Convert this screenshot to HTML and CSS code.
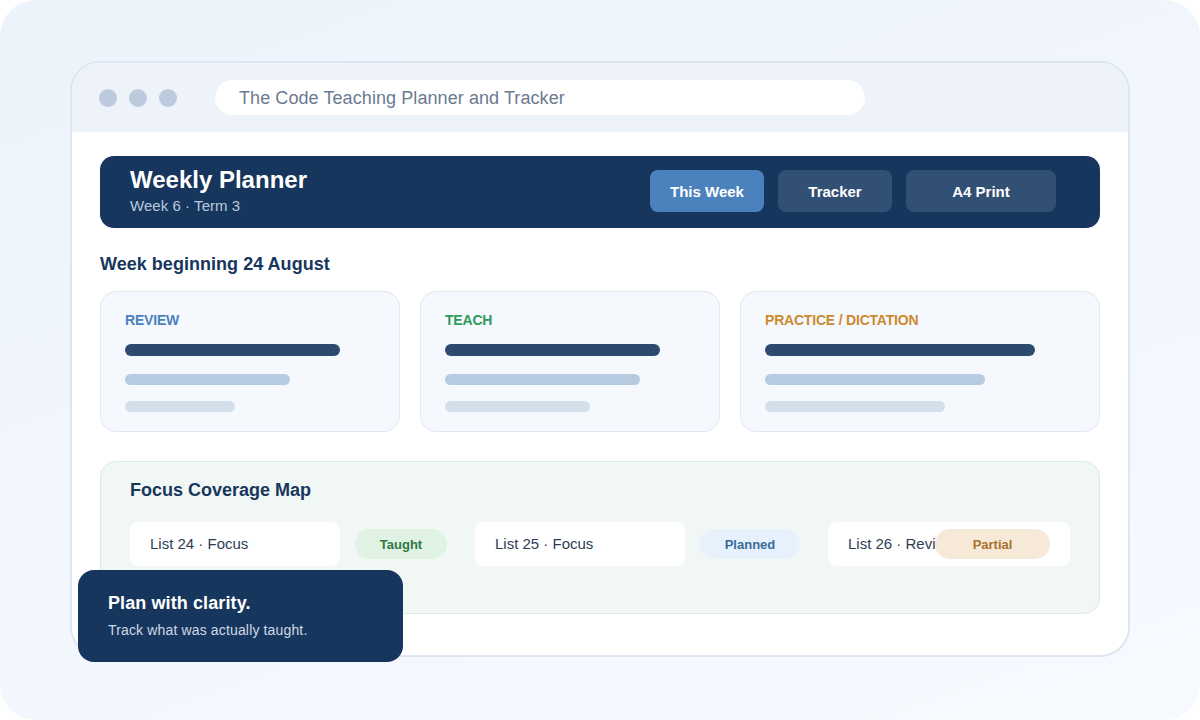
FILE: index.html
```html
<!DOCTYPE html>
<html lang="en">
<head>
<meta charset="utf-8">
<title>The Code Teaching Planner and Tracker</title>
<link rel="stylesheet" href="styles.css">
</head>
<body>
<div class="stage">
  <div class="window">
    <div class="topbar">
      <div class="dots"><span class="dot"></span><span class="dot"></span><span class="dot"></span></div>
      <div class="address">The Code Teaching Planner and Tracker</div>
    </div>
    <div class="content">
      <header class="hero">
        <div class="hero-text">
          <div class="hero-title">Weekly Planner</div>
          <div class="hero-sub">Week 6 · Term 3</div>
        </div>
        <nav class="tabs">
          <span class="tab tab-active w1">This Week</span>
          <span class="tab w1">Tracker</span>
          <span class="tab w2">A4 Print</span>
        </nav>
      </header>

      <h2 class="section-title">Week beginning 24 August</h2>

      <div class="cards">
        <div class="card">
          <div class="card-label review">REVIEW</div>
          <div class="bar bar-dark" style="width:215px"></div>
          <div class="bar bar-mid" style="width:165px"></div>
          <div class="bar bar-light" style="width:110px"></div>
        </div>
        <div class="card">
          <div class="card-label teach">TEACH</div>
          <div class="bar bar-dark" style="width:215px"></div>
          <div class="bar bar-mid" style="width:195px"></div>
          <div class="bar bar-light" style="width:145px"></div>
        </div>
        <div class="card card-wide">
          <div class="card-label practice">PRACTICE / DICTATION</div>
          <div class="bar bar-dark" style="width:270px"></div>
          <div class="bar bar-mid" style="width:220px"></div>
          <div class="bar bar-light" style="width:180px"></div>
        </div>
      </div>

      <section class="coverage">
        <h3 class="coverage-title">Focus Coverage Map</h3>
        <div class="cov-row">
          <div class="cov-item">List 24 · Focus</div>
          <span class="pill taught">Taught</span>
          <div class="cov-item">List 25 · Focus</div>
          <span class="pill planned">Planned</span>
          <div class="cov-item cov-wide">List 26 · Review</div>
          <span class="pill partial">Partial</span>
        </div>
      </section>
    </div>
  </div>

  <div class="callout">
    <div class="callout-title">Plan with clarity.</div>
    <div class="callout-sub">Track what was actually taught.</div>
  </div>
</div>
</body>
</html>
```

FILE: styles.css
```css
* { box-sizing: border-box; }

html, body {
  margin: 0;
  padding: 0;
  background: #ffffff;
  font-family: "Liberation Sans", Arial, sans-serif;
}

.stage {
  position: relative;
  width: 1200px;
  height: 720px;
  border-radius: 36px;
  background: linear-gradient(160deg, #edf3fb 0%, #f2f7fd 50%, #f7faff 100%);
  padding: 61px 70px 0 70px;
  overflow: hidden;
}

.window {
  width: 1060px;
  height: 596px;
  border: 2px solid #dde6f1;
  border-radius: 30px;
  background: #ffffff;
  overflow: hidden;
}

.topbar {
  height: 69px;
  background: #eef3fa;
  display: flex;
  align-items: center;
  padding: 0 0 0 27px;
}

.dots {
  display: flex;
  gap: 12px;
}

.dot {
  width: 18px;
  height: 18px;
  border-radius: 50%;
  background: #bdcadd;
}

.address {
  margin-left: 38px;
  width: 650px;
  height: 35px;
  border-radius: 18px;
  background: #ffffff;
  color: #6b7a90;
  font-size: 18px;
  line-height: 36px;
  letter-spacing: 0.08px;
  padding-left: 24px;
}

.content {
  padding: 24px 28px 0 28px;
}

.hero {
  height: 72px;
  background: #17365d;
  border-radius: 14px;
  display: flex;
  align-items: center;
  justify-content: space-between;
  padding: 0 44px 0 30px;
}

.hero-title {
  color: #ffffff;
  font-size: 24px;
  font-weight: bold;
  line-height: 28px;
  margin-top: -3px;
}

.hero-sub {
  color: #b9c9dd;
  font-size: 15px;
  line-height: 20px;
  margin-top: 2px;
  letter-spacing: 0.05px;
}

.tabs {
  display: flex;
  gap: 14px;
  margin-top: -2px;
}

.tab {
  height: 42px;
  border-radius: 8px;
  background: #324f74;
  color: #ffffff;
  font-size: 15px;
  font-weight: bold;
  display: flex;
  align-items: center;
  justify-content: center;
}

.tab-active { background: #4b81bc; }
.w1 { width: 114px; }
.w2 { width: 150px; }

.section-title {
  margin: 25px 0 0 0;
  color: #17365d;
  font-size: 18px;
  font-weight: bold;
  line-height: 22px;
  letter-spacing: 0.03px;
}

.cards {
  margin-top: 16px;
  display: grid;
  grid-template-columns: 300px 300px 360px;
  gap: 20px;
}

.card {
  height: 141px;
  background: #f5f8fc;
  border: 1.5px solid #dee7f2;
  border-radius: 16px;
  padding: 20px 24px 0 24px;
}

.card-label {
  font-size: 14px;
  font-weight: bold;
  line-height: 16px;
  letter-spacing: -0.2px;
}

.review { color: #4b81bc; }
.teach { color: #2e9a5b; }
.practice { color: #cc8a30; }

.bar {
  border-radius: 6px;
}

.bar-dark {
  margin-top: 16px;
  height: 12px;
  background: #2c4a6e;
}

.bar-mid {
  margin-top: 18px;
  height: 11px;
  background: #b7cbe0;
}

.bar-light {
  margin-top: 16px;
  height: 11px;
  background: #d3dfeb;
}

.coverage {
  margin-top: 29px;
  height: 153px;
  background: #f1f7f4;
  border: 1.5px solid #dde7ee;
  border-radius: 16px;
  padding: 17px 30px 0 29px;
}

.coverage-title {
  margin: 0;
  color: #17365d;
  font-size: 18px;
  font-weight: bold;
  line-height: 22px;
}

.cov-row {
  margin-top: 21px;
  display: flex;
  align-items: center;
}

.cov-item {
  width: 210px;
  height: 44px;
  border-radius: 8px;
  background: #ffffff;
  color: #2c3e55;
  font-size: 15px;
  line-height: 44px;
  padding-left: 20px;
  white-space: nowrap;
  overflow: hidden;
}

.cov-wide { width: 242px; }

.pill {
  height: 30px;
  border-radius: 15px;
  font-size: 13px;
  font-weight: bold;
  display: flex;
  align-items: center;
  justify-content: center;
  position: relative;
}

.taught {
  width: 92px;
  margin: 0 28px 0 15px;
  background: #dff2e4;
  color: #2e7a45;
}

.planned {
  width: 100px;
  margin: 0 28px 0 15px;
  background: #e6f1fb;
  color: #3a6a9c;
}

.partial {
  width: 115px;
  margin-left: -135px;
  background: #f7e9d8;
  color: #a87030;
}

.callout {
  position: absolute;
  left: 78px;
  top: 570px;
  width: 325px;
  height: 92px;
  background: #17365d;
  border-radius: 16px;
  padding: 22px 30px 0 30px;
}

.callout-title {
  color: #ffffff;
  font-size: 18px;
  font-weight: bold;
  line-height: 22px;
  letter-spacing: 0.1px;
}

.callout-sub {
  margin-top: 7px;
  color: #cfd9e6;
  font-size: 14px;
  line-height: 18px;
  letter-spacing: 0.15px;
}
```
